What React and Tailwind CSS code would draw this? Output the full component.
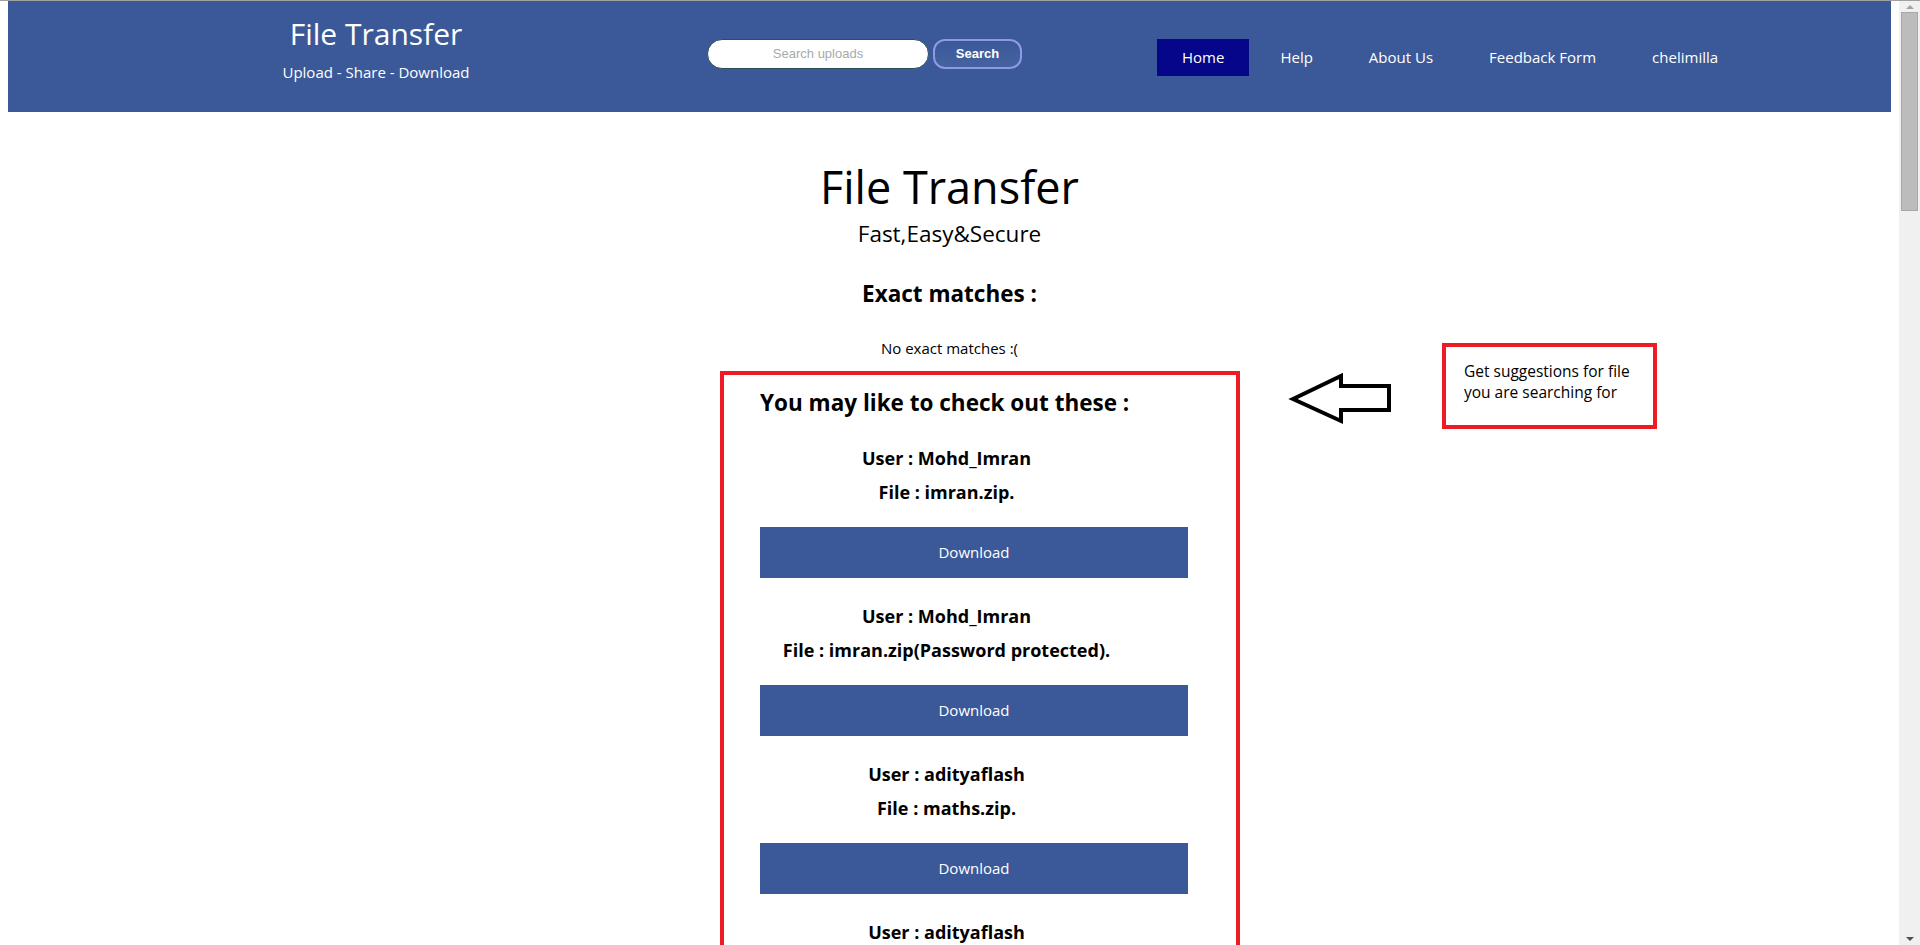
import React from "react";

const font = { fontFamily: '"Open Sans", "Noto Sans", sans-serif' };

function Item({ user, file }) {
  return (
    <div className="flex flex-col">
      <div className="mt-[26px] h-[24px] whitespace-nowrap text-center text-[18px] font-bold leading-[24px] text-black">
        User : {user}
      </div>
      <div className="mt-[10px] h-[24px] whitespace-nowrap text-center text-[18px] font-bold leading-[24px] text-black">
        File : {file}
      </div>
      <div className="mt-[23px] flex h-[51px] w-[428px] items-center justify-center bg-[#3b5998] text-[15px] text-white">
        Download
      </div>
    </div>
  );
}

export default function App() {
  return (
    <div className="flex h-[945px] w-[1920px] overflow-hidden bg-white" style={font}>
      <div className="flex h-full flex-1 flex-col overflow-hidden border-t border-[#a0a0a0] px-[8px]">
        {/* Header */}
        <header className="flex h-[111px] shrink-0 items-start bg-[#3b5998] text-white">
          <div className="ml-[218px] flex w-[300px] flex-col items-center">
            <div className="mt-[13px] h-[40px] text-[30px] leading-[40px]">File Transfer</div>
            <div className="mt-[7px] h-[22px] text-[15px] leading-[22px]">Upload - Share - Download</div>
          </div>
          <div className="ml-[181px] mt-[38px] flex items-center">
            <div
              className="flex h-[30px] w-[222px] items-center justify-center rounded-[15px] border border-[#2e4d55] bg-white text-[13px] text-[#a9a9a9]"
              style={{ fontFamily: '"Liberation Sans", Arial, sans-serif' }}
            >
              Search uploads
            </div>
            <div
              className="ml-[4px] flex h-[30px] w-[89px] items-center justify-center rounded-[12px] border-2 border-[#8e9ae4] bg-gradient-to-b from-[#3b5998] to-[#4563a0] text-[13px] font-bold text-white"
              style={{ fontFamily: '"Liberation Sans", Arial, sans-serif' }}
            >
              Search
            </div>
          </div>
          <nav className="ml-[135px] mt-[38px] flex items-center gap-[6px] text-[15px]">
            <div className="flex h-[37px] items-center bg-[#06068a] px-[25px]">Home</div>
            <div className="flex h-[37px] items-center px-[25px]">Help</div>
            <div className="flex h-[37px] items-center px-[25px]">About Us</div>
            <div className="flex h-[37px] items-center px-[25px]">Feedback Form</div>
            <div className="flex h-[37px] items-center px-[25px]">chelimilla</div>
          </nav>
        </header>

        {/* Main */}
        <main className="flex flex-col items-center text-black">
          <div className="mt-[47px] h-[56px] text-[45px] leading-[56px]">File Transfer</div>
          <div className="mt-[4px] h-[30px] text-[22.5px] leading-[30px]">Fast,Easy&amp;Secure</div>
          <div className="mt-[30px] h-[30px] text-[22.5px] font-bold leading-[30px]">Exact matches :</div>
          <div className="mt-[29px] h-[20px] text-[15px] leading-[20px]">No exact matches :(</div>
        </main>

        <div className="relative mt-[13px] flex">
          <div className="ml-[712px] w-[520px] shrink-0 border-4 border-b-0 border-[#ed1c24] pl-[36px] pt-[13px]">
            <div className="inline-flex flex-col">
              <div className="h-[30px] whitespace-nowrap text-[22.5px] font-bold leading-[30px] text-black">
                You may like to check out these :
              </div>
              <div className="w-0 pt-[2px]">
                <div className="w-[373px]">
                  <Item user="Mohd_Imran" file="imran.zip." />
                  <Item user="Mohd_Imran" file="imran.zip(Password protected)." />
                  <Item user="adityaflash" file="maths.zip." />
                  <Item user="adityaflash" file="physics.zip." />
                </div>
              </div>
            </div>
          </div>

          {/* annotation arrow */}
          <svg
            className="absolute left-[1273px] top-[1px]"
            width="116"
            height="56"
            viewBox="1280 372 116 56"
          >
            <polygon
              points="1292,399 1340,376 1340,386 1388,386 1388,410 1340,410 1340,421"
              fill="white"
              stroke="black"
              strokeWidth="4"
              strokeLinejoin="miter"
            />
          </svg>

          {/* annotation callout */}
          <div className="absolute left-[1434px] top-[-28px] h-[86px] w-[215px] border-4 border-[#ed1c24] bg-white pl-[18px] pt-[14px] text-[15.5px] leading-[21px] text-black">
            Get suggestions for file
            <br />
            you are searching for
          </div>
        </div>
      </div>

      {/* scrollbar */}
      <div className="flex h-full w-[21px] shrink-0 flex-col items-center border-t border-[#a0a0a0] bg-[#f0f0f0]">
        <div className="mt-[4px] h-0 w-0 border-x-[4px] border-b-[4px] border-x-transparent border-b-[#a3a3a3]" />
        <div className="mt-[3px] h-[199px] w-[17px] border border-[#a8a8a8] bg-[#bcbcbc]" />
        <div className="flex-1" />
        <div className="mb-[4px] h-0 w-0 border-x-[4px] border-t-[4px] border-x-transparent border-t-[#505050]" />
      </div>
    </div>
  );
}
